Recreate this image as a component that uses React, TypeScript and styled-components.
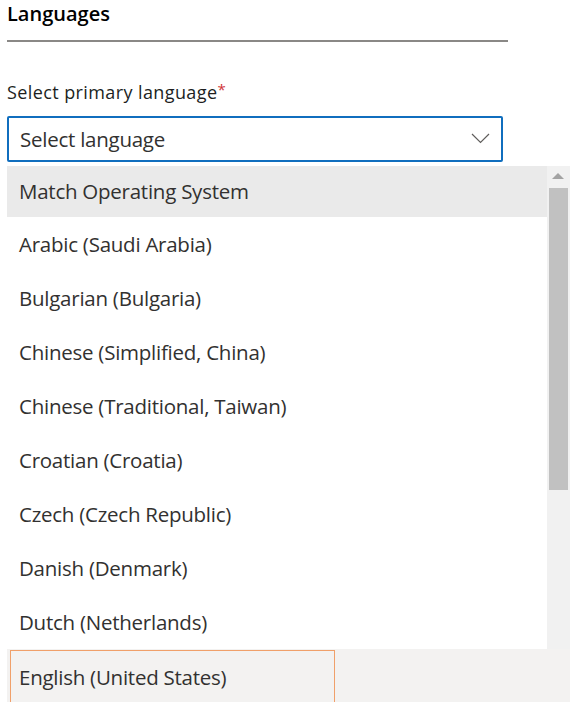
import React from "react";
import styled, { createGlobalStyle } from "styled-components";

const Global = createGlobalStyle`
  html, body { margin: 0; padding: 0; background: #ffffff; }
  body { font-family: "Open Sans", "Noto Sans", sans-serif; overflow: hidden; }
`;

const Page = styled.div`
  width: 580px;
  height: 702px;
  overflow: hidden;
  padding: 0 0 0 7px;
  box-sizing: border-box;
`;

const Title = styled.h2`
  margin: 0;
  padding-top: 1px;
  height: 42px;
  width: 501px;
  box-sizing: border-box;
  border-bottom: 2px solid #8a8886;
  font-size: 20px;
  font-weight: 600;
  line-height: 26px;
  color: #000000;
`;

const Label = styled.div`
  margin-top: 35px;
  height: 25px;
  font-size: 18px;
  line-height: 25px;
  color: #201f1e;
  letter-spacing: 0.4px;
`;

const Req = styled.span`
  color: #d13438;
  font-size: 15px;
  vertical-align: 4px;
`;

const Dropdown = styled.div`
  margin-top: 14px;
  width: 496px;
  height: 46px;
  box-sizing: border-box;
  border: 2px solid #106ebe;
  border-radius: 2px;
  display: flex;
  align-items: center;
  justify-content: space-between;
  padding: 0 11px 0 11px;
`;

const Placeholder = styled.span`
  font-size: 20.5px;
  color: #323130;
  letter-spacing: -0.25px;
`;

const Chevron = styled.svg`
  width: 19px;
  height: 11px;
  margin-top: -1px;
`;

const ListWrap = styled.div`
  margin-top: 4px;
  width: 563px;
  display: flex;
  flex-direction: column;
`;

const ListBody = styled.div`
  display: flex;
  height: 483px;
`;

const Items = styled.div`
  flex: 1;
  display: flex;
  flex-direction: column;
`;

const Item = styled.div<{ $h: number; $active?: boolean }>`
  height: ${(p) => p.$h}px;
  flex: none;
  display: flex;
  align-items: center;
  padding-left: 12px;
  padding-bottom: ${(p) => (p.$active ? 2 : 0)}px;
  box-sizing: border-box;
  background: ${(p) => (p.$active ? "#eaeaea" : "#ffffff")};
  font-size: 20.5px;
  color: #323130;
  letter-spacing: -0.25px;
`;

const Scrollbar = styled.div`
  width: 23px;
  background: #f1f1f1;
  display: flex;
  flex-direction: column;
  align-items: center;
  padding-right: 2px;
  box-sizing: border-box;
`;

const Arrow = styled.div`
  width: 0;
  height: 0;
  margin-top: 7px;
  border-left: 6px solid transparent;
  border-right: 6px solid transparent;
  border-bottom: 6px solid #a3a3a3;
`;

const Thumb = styled.div`
  margin-top: 9px;
  margin-left: 2px;
  width: 19px;
  height: 302px;
  background: #c1c1c1;
`;

const FocusRow = styled.div`
  height: 60px;
  background: #f3f2f1;
  padding-left: 3px;
  padding-top: 1px;
  box-sizing: border-box;
`;

const FocusBox = styled.div`
  width: 325px;
  height: 60px;
  box-sizing: border-box;
  border: 1px solid #f0a06a;
  border-bottom: none;
  display: flex;
  align-items: flex-start;
  padding: 12px 0 0 8px;
  font-size: 20.5px;
  color: #323130;
  letter-spacing: -0.25px;
`;

const languages = [
  "Arabic (Saudi Arabia)",
  "Bulgarian (Bulgaria)",
  "Chinese (Simplified, China)",
  "Chinese (Traditional, Taiwan)",
  "Croatian (Croatia)",
  "Czech (Czech Republic)",
  "Danish (Denmark)",
  "Dutch (Netherlands)",
];

export default function App() {
  return (
    <Page>
      <Global />
      <Title>Languages</Title>
      <Label>
        Select primary language<Req>*</Req>
      </Label>
      <Dropdown>
        <Placeholder>Select language</Placeholder>
        <Chevron viewBox="0 0 19 11">
          <polyline points="1,1 9.5,9.5 18,1" fill="none" stroke="#605e5c" strokeWidth="1.2" />
        </Chevron>
      </Dropdown>
      <ListWrap>
        <ListBody>
          <Items>
            <Item $h={51} $active>Match Operating System</Item>
            {languages.map((l) => (
              <Item key={l} $h={54}>{l}</Item>
            ))}
          </Items>
          <Scrollbar>
            <Arrow />
            <Thumb />
          </Scrollbar>
        </ListBody>
        <FocusRow>
          <FocusBox>English (United States)</FocusBox>
        </FocusRow>
      </ListWrap>
    </Page>
  );
}
